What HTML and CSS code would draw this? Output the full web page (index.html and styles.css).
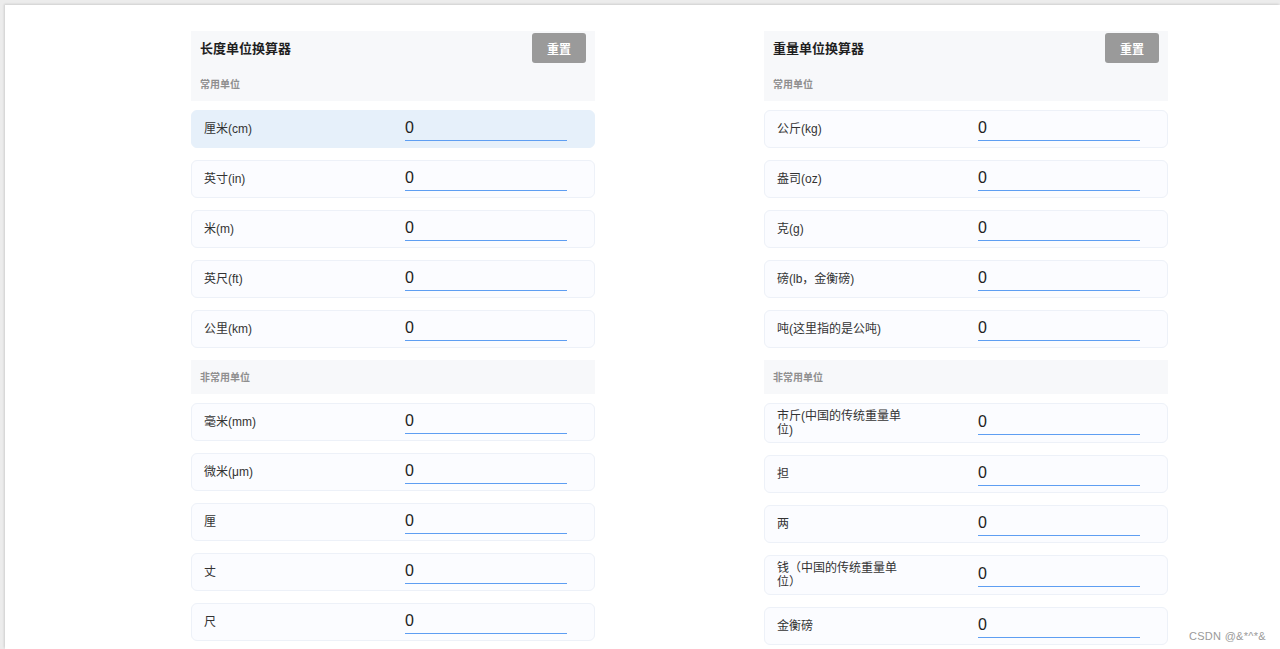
FILE: index.html
```html
<!DOCTYPE html>
<html lang="zh-CN">
<head>
<meta charset="utf-8">
<title>单位换算器</title>
<link rel="stylesheet" href="styles.css">
</head>
<body>
<div class="frame">
  <div class="columns">
    <section class="card">
      <div class="head">
        <div class="head-top">
          <h2 class="title">长度单位换算器</h2>
          <button class="reset">重置</button>
        </div>
        <div class="group">常用单位</div>
      </div>
      <div class="row active"><span class="label">厘米(cm)</span><input class="val" value="0"></div>
      <div class="row"><span class="label">英寸(in)</span><input class="val" value="0"></div>
      <div class="row"><span class="label">米(m)</span><input class="val" value="0"></div>
      <div class="row"><span class="label">英尺(ft)</span><input class="val" value="0"></div>
      <div class="row"><span class="label">公里(km)</span><input class="val" value="0"></div>
      <div class="section">非常用单位</div>
      <div class="row"><span class="label">毫米(mm)</span><input class="val" value="0"></div>
      <div class="row"><span class="label">微米(μm)</span><input class="val" value="0"></div>
      <div class="row"><span class="label">厘</span><input class="val" value="0"></div>
      <div class="row"><span class="label">丈</span><input class="val" value="0"></div>
      <div class="row"><span class="label">尺</span><input class="val" value="0"></div>
    </section>
    <section class="card">
      <div class="head">
        <div class="head-top">
          <h2 class="title">重量单位换算器</h2>
          <button class="reset">重置</button>
        </div>
        <div class="group">常用单位</div>
      </div>
      <div class="row"><span class="label">公斤(kg)</span><input class="val" value="0"></div>
      <div class="row"><span class="label">盎司(oz)</span><input class="val" value="0"></div>
      <div class="row"><span class="label">克(g)</span><input class="val" value="0"></div>
      <div class="row"><span class="label">磅(lb，金衡磅)</span><input class="val" value="0"></div>
      <div class="row"><span class="label">吨(这里指的是公吨)</span><input class="val" value="0"></div>
      <div class="section">非常用单位</div>
      <div class="row"><span class="label">市斤(中国的传统重量单位)</span><input class="val" value="0"></div>
      <div class="row"><span class="label">担</span><input class="val" value="0"></div>
      <div class="row"><span class="label">两</span><input class="val" value="0"></div>
      <div class="row"><span class="label">钱（中国的传统重量单位）</span><input class="val" value="0"></div>
      <div class="row"><span class="label">金衡磅</span><input class="val" value="0"></div>
    </section>
  </div>
  <div class="watermark">CSDN @&amp;*^*&amp;</div>
</div>
</body>
</html>
```

FILE: styles.css
```css
html, body {
  margin: 0;
  padding: 0;
  height: 100%;
  overflow: hidden;
  background: #ececec;
  font-family: "Liberation Sans", "Noto Sans CJK SC", sans-serif;
}
.frame {
  position: relative;
  margin: 5px 0 0 5px;
  height: calc(100% - 5px);
  background: #ffffff;
  box-shadow: -1px -1px 2px rgba(0,0,0,0.12);
  box-sizing: border-box;
  padding: 26px 0 0 186px;
  overflow: hidden;
}
.columns {
  display: flex;
  gap: 169px;
}
.card {
  width: 404px;
  display: flex;
  flex-direction: column;
}
.head {
  background: #f7f8fa;
  padding: 2px 9px 0 9px;
  height: 70px;
  box-sizing: border-box;
  margin-bottom: 9px;
}
.head-top {
  display: flex;
  justify-content: space-between;
  align-items: flex-start;
  height: 40px;
}
.title {
  margin: 0;
  font-family: "Noto Sans CJK SC", sans-serif;
  font-size: 13px;
  font-weight: 700;
  color: #1f1f1f;
  line-height: 30px;
}
.reset {
  width: 54px;
  height: 30px;
  border: none;
  border-radius: 3px;
  background: #9a9a9a;
  color: #ffffff;
  font-family: "Noto Sans CJK SC", sans-serif;
  font-size: 12px;
  font-weight: 700;
  padding: 0;
}
.group {
  font-family: "Noto Sans CJK SC", sans-serif;
  font-size: 10px;
  font-weight: 700;
  color: #8f8f8f;
  line-height: 22px;
}
.section {
  background: #f7f8fa;
  height: 34px;
  line-height: 34px;
  padding-left: 9px;
  font-family: "Noto Sans CJK SC", sans-serif;
  font-size: 10px;
  font-weight: 700;
  color: #8f8f8f;
  margin-bottom: 9px;
}
.row {
  display: flex;
  align-items: center;
  box-sizing: border-box;
  min-height: 38px;
  padding: 5px 27px 5px 12px;
  margin-bottom: 12px;
  background: #fbfcff;
  border: 1px solid #edf1f8;
  border-radius: 6px;
}
.row.active {
  background: #e6f0fa;
  border-color: #e6f0fa;
}
.label {
  width: 130px;
  font-size: 12px;
  line-height: 14px;
  color: #333333;
}
.val {
  margin-left: auto;
  width: 162px;
  height: 24px;
  box-sizing: border-box;
  border: none;
  border-bottom: 1.5px solid #5e9ef2;
  background: transparent;
  padding: 0 0 1px 0;
  font-family: "Liberation Sans", sans-serif;
  font-size: 16px;
  color: #222222;
  outline: none;
}
.watermark {
  position: absolute;
  right: 14px;
  bottom: 7px;
  font-family: "Liberation Sans", "Noto Sans CJK SC", sans-serif;
  font-size: 11px;
  letter-spacing: 0.3px;
  color: #9a9a9a;
}
```
